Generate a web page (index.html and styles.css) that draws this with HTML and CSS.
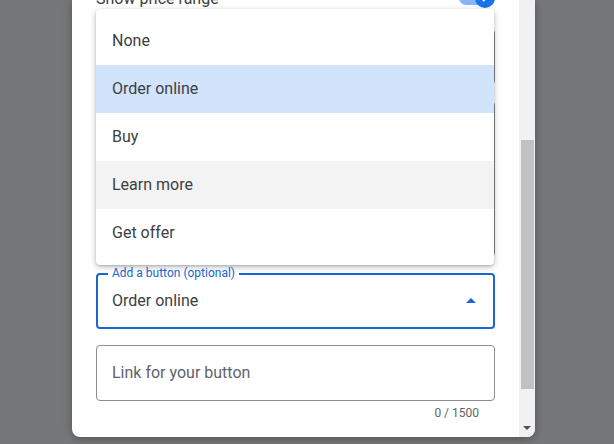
FILE: index.html
```html
<!DOCTYPE html>
<html lang="en">
<head>
    <meta charset="UTF-8">
    <title>Add a button</title>
    <link rel="stylesheet" href="styles.css">
</head>
<body>
    <div class="dialog">
        <div class="dialog-body">
            <div class="toggle-row">
                <span>Show price range</span>
                <span class="toggle">
                    <span class="toggle-track"></span>
                    <span class="toggle-knob">
                        <svg width="12" height="12" viewBox="0 0 24 24"><path d="M5 12.5l4.5 4.5L19 7.5" fill="none" stroke="#fff" stroke-width="3.2"/></svg>
                    </span>
                </span>
            </div>

            <div class="field field-price"></div>
            <div class="field field-desc"></div>

            <!-- Button select (open) -->
            <div class="select">
                <span class="select-label">Add a button (optional)</span>
                <span class="select-value">Order online</span>
                <span class="caret"></span>
            </div>

            <div class="field field-link">
                <span class="placeholder">Link for your button</span>
            </div>
            <div class="counter">0 / 1500</div>

            <ul class="menu">
                <li>None</li>
                <li class="selected">Order online</li>
                <li>Buy</li>
                <li class="hover">Learn more</li>
                <li>Get offer</li>
            </ul>
        </div>

        <div class="scrollbar">
            <div class="thumb"></div>
            <div class="scroll-down"></div>
        </div>
    </div>
</body>
</html>
```

FILE: styles.css
```css
body {
    margin: 0;
    background: #767779;
    font-family: Roboto, "Liberation Sans", sans-serif;
    color: #3c4043;
    height: 444px;
    overflow: hidden;
}
.dialog {
    margin-left: 72px;
    width: 463px;
    height: 437px;
    background: #fff;
    border-radius: 0 0 8px 8px;
    box-shadow: 0 2px 10px rgba(0, 0, 0, .3);
    display: flex;
    overflow: hidden;
}
.dialog-body {
    flex: 1;
    position: relative;
    padding: 0 24px;
    display: flex;
    flex-direction: column;
}
.toggle-row {
    margin-top: -14px;
    height: 24px;
    display: flex;
    align-items: center;
    justify-content: space-between;
    font-size: 16px;
}
.toggle { display: flex; align-items: center; }
.toggle-track {
    width: 34px;
    height: 14px;
    border-radius: 7px;
    background: #8ab4f8;
}
.toggle-knob {
    width: 20px;
    height: 20px;
    margin-left: -18px;
    border-radius: 50%;
    background: #1a73e8;
    display: flex;
    align-items: center;
    justify-content: center;
}
.field {
    box-sizing: border-box;
    border: 1px solid #80868b;
    border-radius: 4px;
    height: 56px;
    margin-top: 16px;
}
.field-price { margin-top: 19px; }
.field-desc { height: 156px; }
.select {
    box-sizing: border-box;
    position: relative;
    margin-top: 16px;
    height: 56px;
    border: 2px solid #1967d2;
    border-radius: 4px;
    padding: 0 17px 2px 14px;
    display: flex;
    align-items: center;
    justify-content: space-between;
    font-size: 16px;
}
.select-label {
    position: absolute;
    left: 10px;
    top: -10px;
    padding: 0 4px;
    background: #fff;
    font-size: 12px;
    line-height: 16px;
    color: #1967d2;
}
.caret {
    width: 0;
    height: 0;
    border-left: 5px solid transparent;
    border-right: 5px solid transparent;
    border-bottom: 5px solid #1967d2;
}
.field-link {
    display: flex;
    align-items: center;
    padding: 0 0 2px 15px;
    font-size: 16px;
    border-color: #8a8d91;
}
.placeholder { color: #5f6368; }
.counter {
    margin-top: 4px;
    padding-right: 16px;
    text-align: right;
    font-size: 12px;
    line-height: 16px;
    color: #5f6368;
}
.menu {
    position: absolute;
    left: 24px;
    top: 9px;
    width: 398px;
    margin: 0;
    padding: 8px 0;
    list-style: none;
    background: #fff;
    border-radius: 4px;
    box-shadow: 0 2px 6px rgba(0, 0, 0, .25), 0 1px 2px rgba(0, 0, 0, .15);
}
.menu li {
    box-sizing: border-box;
    height: 48px;
    padding: 0 0 2px 16px;
    display: flex;
    align-items: center;
    font-size: 16px;
}
.menu .selected { background: #d2e3fc; }
.menu .hover { background: #f3f3f3; }
.scrollbar {
    width: 16px;
    background: #f1f1f1;
    display: flex;
    flex-direction: column;
}
.thumb {
    margin: 140px 0 0 2px;
    width: 13px;
    height: 249px;
    background: #c1c1c1;
}
.scroll-down {
    margin: auto auto 7px;
    width: 0;
    height: 0;
    border-left: 4px solid transparent;
    border-right: 4px solid transparent;
    border-top: 4px solid #505050;
}
```
